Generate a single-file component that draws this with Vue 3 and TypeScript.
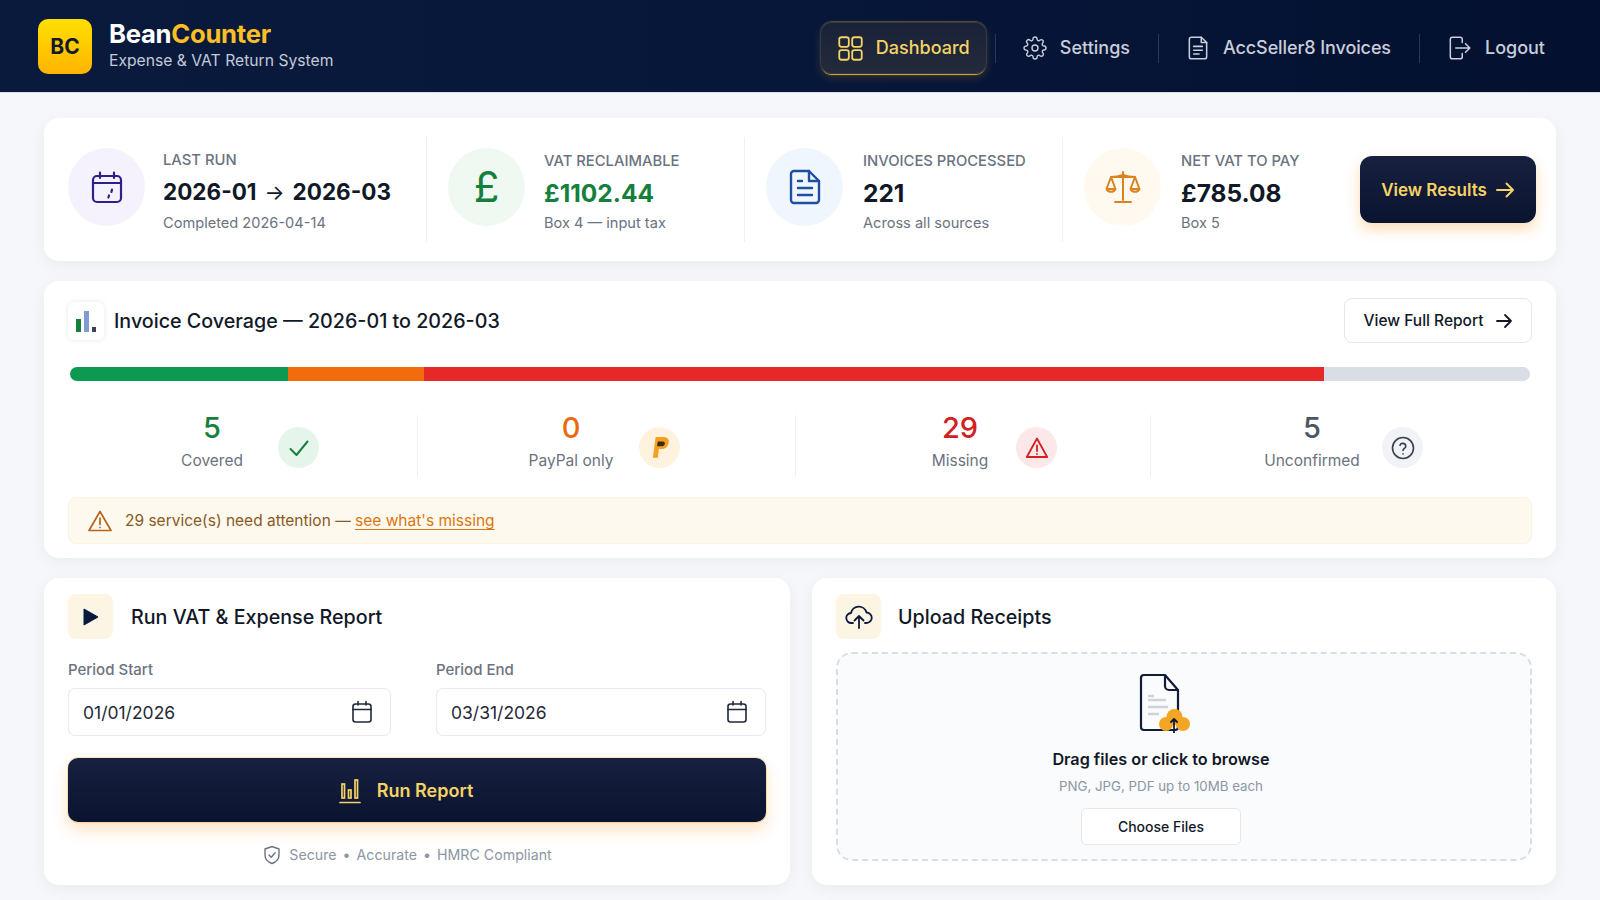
<template>
  <div class="page">
    <header class="topbar">
      <div class="brand">
        <div class="logo">BC</div>
        <div class="brand-text">
          <div class="brand-name">Bean<span>Counter</span></div>
          <div class="brand-sub">Expense &amp; VAT Return System</div>
        </div>
      </div>
      <nav class="nav">
        <a class="nav-item active">
          <svg width="27" height="27" viewBox="0 0 24 24" fill="none" stroke="currentColor" stroke-width="1.600">
            <rect x="2" y="2" width="8.500" height="8.500" rx="2" /><rect x="13.500" y="2" width="8.500" height="8.500" rx="2" />
            <rect x="2" y="13.500" width="8.500" height="8.500" rx="2" /><rect x="13.500" y="13.500" width="8.500" height="8.500" rx="2" />
          </svg>
          Dashboard
        </a>
        <span class="nav-sep first"></span>
        <a class="nav-item settings">
          <svg width="24" height="24" viewBox="0 0 24 24" fill="none" stroke="currentColor" stroke-width="1.400" stroke-linecap="round" stroke-linejoin="round">
            <circle cx="12" cy="12" r="3" />
            <path d="M19.4 15a1.65 1.65 0 0 0 .33 1.82l.06.06a2 2 0 1 1-2.83 2.83l-.06-.06a1.65 1.65 0 0 0-1.82-.33 1.65 1.65 0 0 0-1 1.51V21a2 2 0 0 1-4 0v-.09A1.65 1.65 0 0 0 9 19.4a1.65 1.65 0 0 0-1.82.33l-.06.06a2 2 0 1 1-2.83-2.83l.06-.06a1.65 1.65 0 0 0 .33-1.82 1.65 1.65 0 0 0-1.51-1H3a2 2 0 0 1 0-4h.09A1.65 1.65 0 0 0 4.6 9a1.65 1.65 0 0 0-.33-1.82l-.06-.06a2 2 0 1 1 2.83-2.83l.06.06a1.65 1.65 0 0 0 1.82.33H9a1.65 1.65 0 0 0 1-1.51V3a2 2 0 0 1 4 0v.09a1.65 1.65 0 0 0 1 1.51 1.65 1.65 0 0 0 1.82-.33l.06-.06a2 2 0 1 1 2.83 2.83l-.06.06a1.65 1.65 0 0 0-.33 1.82V9a1.65 1.65 0 0 0 1.51 1H21a2 2 0 0 1 0 4h-.09a1.65 1.65 0 0 0-1.51 1z" />
          </svg>
          Settings
        </a>
        <span class="nav-sep"></span>
        <a class="nav-item invoices">
          <svg width="26" height="26" viewBox="0 0 24 24" fill="none" stroke="currentColor" stroke-width="1.400" stroke-linecap="round" stroke-linejoin="round">
            <path d="M6 2h9l5 5v13a2 2 0 0 1-2 2H6a2 2 0 0 1-2-2V4a2 2 0 0 1 2-2z" /><path d="M15 2v5h5" />
            <path d="M8 10.500h8M8 14h8M8 17.500h5" />
          </svg>
          AccSeller8 Invoices
        </a>
        <span class="nav-sep"></span>
        <a class="nav-item logout">
          <svg width="26" height="26" viewBox="0 0 24 24" fill="none" stroke="currentColor" stroke-width="1.400" stroke-linecap="round" stroke-linejoin="round">
            <path d="M15 7V4a2 2 0 0 0-2-2H6a2 2 0 0 0-2 2v16a2 2 0 0 0 2 2h7a2 2 0 0 0 2-2v-3" /><path d="M9 12h13M18 8l4 4-4 4" />
          </svg>
          Logout
        </a>
      </nav>
    </header>

    <main class="content">
      <section class="card summary">
        <div v-for="stat in stats" :key="stat.label" class="stat">
          <div class="stat-icon" :class="stat.tone">
            <svg v-if="stat.tone === 'violet'" width="34" height="34" viewBox="0 0 34 34" fill="none" stroke="currentColor" stroke-width="2.200" stroke-linecap="round" stroke-linejoin="round">
              <rect x="3" y="6" width="28" height="26" rx="4" /><path d="M3 13h28M10 2.500V8M24 2.500V8M22 19.500l-.6 2.500M19 25.500l-.6 2" />
            </svg>
            <span v-else-if="stat.tone === 'green'" class="pound">£</span>
            <svg v-else-if="stat.tone === 'blue'" width="32" height="36" viewBox="0 0 32 36" fill="none" stroke="currentColor" stroke-width="2.400" stroke-linecap="round" stroke-linejoin="round">
              <path d="M6 2h14l10 10v19a3 3 0 0 1-3 3H5a3 3 0 0 1-3-3V5a3 3 0 0 1 3-3z" /><path d="M20 2v10h10" /><path d="M9 12h4M9 19h14M9 26h14" />
            </svg>
            <svg v-else width="36" height="34" viewBox="0 0 36 34" fill="none" stroke="currentColor" stroke-width="2" stroke-linecap="round" stroke-linejoin="round">
              <path d="M18 2v28M10 32h16M6 7h24M18 5c-3 1-8 2-12 2M18 5c3 1 8 2 12 2" />
              <path d="M6 7 1.500 19a5 5 0 0 0 9 0L6 7zM30 7l-4.500 12a5 5 0 0 0 9 0L30 7zM1.500 19h9M25.500 19h9" />
            </svg>
          </div>
          <div class="stat-body">
            <div class="stat-label">{{ stat.label }}</div>
            <div v-if="stat.range" class="stat-value range">{{ stat.range[0] }}<span>→</span>{{ stat.range[1] }}</div>
            <div v-else class="stat-value" :class="stat.tone">{{ stat.value }}</div>
            <div class="stat-note">{{ stat.note }}</div>
          </div>
        </div>
        <button class="btn-dark results">
          View Results
          <svg width="20" height="18" viewBox="0 0 20 18" fill="none" stroke="currentColor" stroke-width="2" stroke-linecap="round" stroke-linejoin="round"><path d="M2 9h16M11.500 2.500 18 9l-6.500 6.500" /></svg>
        </button>
      </section>

      <section class="card coverage">
        <div class="coverage-head">
          <div class="chart-chip">
            <svg width="22" height="24" viewBox="0 0 22 24">
              <rect x="1" y="10" width="5" height="13" fill="#15803d" /><rect x="9" y="2" width="5" height="21" fill="#7f9bd1" /><rect x="17" y="18" width="4" height="5" fill="#3f3f5a" />
            </svg>
          </div>
          <h2>Invoice Coverage — 2026-01 to 2026-03</h2>
          <button class="btn-light">
            View Full Report
            <svg width="18" height="16" viewBox="0 0 18 16" fill="none" stroke="currentColor" stroke-width="1.800" stroke-linecap="round" stroke-linejoin="round"><path d="M2 8h14M10 2l6 6-6 6" /></svg>
          </button>
        </div>

        <div class="bar">
          <div v-for="seg in segments" :key="seg.color" class="seg" :style="{ width: seg.share + '%', background: seg.color }"></div>
        </div>

        <div class="tallies">
          <div class="tally covered">
            <div class="tally-text"><b>5</b><span>Covered</span></div>
            <div class="tally-icon">
              <svg width="24" height="24" viewBox="0 0 24 24" fill="none" stroke="currentColor" stroke-width="2" stroke-linecap="round" stroke-linejoin="round"><path d="M3.500 13 9.500 19 20.500 5.500" /></svg>
            </div>
          </div>
          <div class="tally paypal">
            <div class="tally-text"><b>0</b><span>PayPal only</span></div>
            <div class="tally-icon">
              <svg width="20" height="24" viewBox="0 0 18 22">
                <path d="M5 1h7c3.500 0 5.500 2 5 5-.6 4-3.500 6-7 6H8l-1 8H2.500L5 1z" fill="#f5a020" />
                <path d="M7 5h4.500c1.500 0 2.200 1 1.900 2.300-.3 1.500-1.500 2.200-3 2.200H6.300L7 5z" fill="#3d2a10" />
              </svg>
            </div>
          </div>
          <div class="tally missing">
            <div class="tally-text"><b>29</b><span>Missing</span></div>
            <div class="tally-icon">
              <svg width="24" height="24" viewBox="0 0 24 24" fill="none" stroke="currentColor" stroke-width="1.800" stroke-linecap="round" stroke-linejoin="round"><path d="M12 2.500 1.800 21h20.400L12 2.500z" /><path d="M12 9.500v5.500M12 18v.1" /></svg>
            </div>
          </div>
          <div class="tally unconfirmed">
            <div class="tally-text"><b>5</b><span>Unconfirmed</span></div>
            <div class="tally-icon">
              <svg width="24" height="24" viewBox="0 0 24 24" fill="none" stroke="currentColor" stroke-width="1.600" stroke-linecap="round" stroke-linejoin="round"><circle cx="12" cy="12" r="10.500" /><path d="M9 9.300a3 3 0 0 1 5.800.9c0 2-2.800 2.400-2.800 4.300M12 17.800v.1" /></svg>
            </div>
          </div>
        </div>

        <div class="attention">
          <svg width="24" height="22" viewBox="0 0 24 22" fill="none" stroke="#b5651d" stroke-width="1.700" stroke-linecap="round" stroke-linejoin="round"><path d="M12 1.500 1 20.500h22L12 1.500z" /><path d="M12 8v6.500M12 17.300v.1" /></svg>
          <span>29 service(s) need attention — <a>see what's missing</a></span>
        </div>
      </section>

      <div class="lower">
        <section class="card run">
          <div class="panel-head">
            <div class="chip">
              <svg width="16" height="18" viewBox="0 0 16 18"><path d="M1 1v16l14-8z" fill="#0b1a3c" stroke="#0b1a3c" stroke-linejoin="round" /></svg>
            </div>
            <h2>Run VAT &amp; Expense Report</h2>
          </div>
          <div class="fields">
            <div v-for="field in fields" :key="field.label" class="field">
              <label>{{ field.label }}</label>
              <div class="date-input">
                {{ field.value }}
                <svg width="22" height="24" viewBox="0 0 22 24" fill="none" stroke="#1f2937" stroke-width="1.600" stroke-linecap="round"><rect x="2" y="4" width="18" height="18" rx="2.500" /><path d="M2 9.500h18M7 1.500V5M15 1.500V5" /></svg>
              </div>
            </div>
          </div>
          <button class="btn-dark run-btn">
            <svg width="22" height="28" viewBox="0 0 22 28" fill="none" stroke="currentColor" stroke-width="1.700" stroke-linecap="round"><path d="M1 26.500h20" /><rect x="3" y="8" width="2.500" height="14" /><rect x="9.500" y="14" width="2.500" height="8" /><rect x="16" y="4" width="2.500" height="18" /></svg>
            Run Report
          </button>
          <div class="assurance">
            <svg width="18" height="20" viewBox="0 0 18 20" fill="none" stroke="#6b7280" stroke-width="1.400" stroke-linecap="round" stroke-linejoin="round"><path d="M9 1.500 2 4v6c0 4 3 7 7 8.500 4-1.500 7-4.500 7-8.500V4L9 1.500z" /><path d="m6 10 2.200 2.200L12.200 7.800" /></svg>
            <span>Secure</span><i>•</i><span>Accurate</span><i>•</i><span>HMRC Compliant</span>
          </div>
        </section>

        <section class="card upload">
          <div class="panel-head">
            <div class="chip">
              <svg width="28" height="26" viewBox="0 0 28 26" fill="none" stroke="#0b1a3c" stroke-width="1.800" stroke-linecap="round" stroke-linejoin="round"><path d="M8 19H6.500A5 5 0 0 1 6 9a8 8 0 0 1 15.500-.5A5.200 5.200 0 0 1 21.500 19H20" /><path d="M14 24V12M9.500 16.500 14 12l4.500 4.500" /></svg>
            </div>
            <h2>Upload Receipts</h2>
          </div>
          <div class="dropzone">
            <svg class="drop-icon" width="52" height="60" viewBox="0 0 52 60" fill="none">
              <path d="M6 2h21l13 15v37a3 3 0 0 1-3 3H6a3 3 0 0 1-3-3V5a3 3 0 0 1 3-3z" stroke="#111c36" stroke-width="2.200" stroke-linejoin="round" />
              <path d="M27 2v11a4 4 0 0 0 4 4h9" stroke="#111c36" stroke-width="2.200" stroke-linejoin="round" />
              <path d="M10 23h6M10 27h18M10 34h20M10 41h11" stroke="#cdd2db" stroke-width="2.600" />
              <g fill="#f5a524">
                <circle cx="36.500" cy="44" r="8" /><circle cx="28" cy="51" r="7" /><circle cx="45" cy="51" r="7" />
              </g>
              <path d="M36 60V46M33 49l3-3 3 3" stroke="#111c36" stroke-width="1.800" stroke-linecap="round" stroke-linejoin="round" />
            </svg>
            <div class="drop-title">Drag files or click to browse</div>
            <div class="drop-note">PNG, JPG, PDF up to 10MB each</div>
            <button class="choose">Choose Files</button>
          </div>
        </section>
      </div>
    </main>
  </div>
</template>

<script setup lang="ts">
interface Stat {
  label: string
  value?: string
  range?: [string, string]
  note: string
  tone: 'violet' | 'green' | 'blue' | 'amber'
}

const stats: Stat[] = [
  { label: 'Last Run', range: ['2026-01', '2026-03'], note: 'Completed 2026-04-14', tone: 'violet' },
  { label: 'VAT Reclaimable', value: '£1102.44', note: 'Box 4 — input tax', tone: 'green' },
  { label: 'Invoices Processed', value: '221', note: 'Across all sources', tone: 'blue' },
  { label: 'Net VAT to Pay', value: '£785.08', note: 'Box 5', tone: 'amber' }
]

const segments = [
  { share: 14.93, color: '#0c9a50' },
  { share: 9.32, color: '#f26c0d' },
  { share: 61.64, color: '#e62828' },
  { share: 14.11, color: '#d8dde6' }
]

const fields = [
  { label: 'Period Start', value: '01/01/2026' },
  { label: 'Period End', value: '03/31/2026' }
]
</script>

<style>
html,
body {
  margin: 0;
  background: #f5f7fa;
}
</style>

<style scoped>
.page {
  min-height: 900px;
  background: #f5f7fa;
  font-family: Inter, 'Liberation Sans', sans-serif;
  color: #111827;
}

.topbar {
  height: 93px;
  box-sizing: border-box;
  padding: 0 38px;
  display: flex;
  align-items: center;
  justify-content: space-between;
  background: linear-gradient(90deg, #0a1a3c 0%, #07173a 50%, #03102f 100%);
  border-bottom: 1px solid #d9dde5;
}

.brand {
  display: flex;
  align-items: center;
  gap: 17px;
}

.logo {
  width: 54px;
  height: 55px;
  border-radius: 10px;
  background: linear-gradient(180deg, #ffe000 0%, #ffb400 100%);
  color: #14182c;
  font-weight: 700;
  font-size: 21px;
  display: flex;
  align-items: center;
  justify-content: center;
}

.brand-text {
  margin-bottom: 4px;
}

.brand-name {
  font-size: 25.700px;
  line-height: 32px;
  font-weight: 700;
  color: #fff;
  letter-spacing: -0.3px;
}

.brand-name span {
  color: #fbbf24;
}

.brand-sub {
  margin-top: 1px;
  font-size: 15.700px;
  line-height: 20px;
  color: #c4cad6;
}

.nav {
  display: flex;
  align-items: center;
  margin-right: 17px;
  padding-top: 4px;
}

.nav-item {
  display: flex;
  align-items: center;
  gap: 13px;
  font-size: 18px;
  line-height: 24px;
  font-weight: 500;
  color: #c9cedb;
}

.nav-item.invoices {
  gap: 12px;
  letter-spacing: -0.1px;
}

.nav-item.active {
  box-sizing: border-box;
  width: 167px;
  height: 52px;
  padding: 0 16px;
  gap: 12px;
  border: 1px solid #343b50;
  border-radius: 12px;
  color: #f6d365;
  background: linear-gradient(180deg, #1a2238 0%, #232a3b 100%);
  box-shadow: 0 2px 1px -1px #e8ab2a, 0 -1px 1px #5e4d2c, 0 4px 8px rgba(245, 184, 46, 0.16);
}

.nav-sep {
  width: 1px;
  height: 29px;
  margin: 0 26px 0 28px;
  background: #28375a;
}

.nav-sep.first {
  margin: 0 27px 0 8px;
}

.card {
  background: #fff;
  border-radius: 15px;
  box-shadow: 0 4px 16px rgba(20, 30, 60, 0.05);
}

.content {
  padding: 25px 44px 15px;
  display: flex;
  flex-direction: column;
  gap: 20px;
}

.summary {
  height: 143px;
  display: grid;
  grid-template-columns: 383px 318px 318px 297px 176px;
  align-items: center;
}

.stat {
  height: 105px;
  display: flex;
  align-items: center;
  gap: 19px;
  padding-left: 21px;
  border-right: 1px solid #eef0f4;
}

.stat:first-child {
  padding-left: 24px;
  gap: 18px;
}

.stat:nth-child(n + 3) {
  gap: 20px;
}

.stat:nth-child(4) {
  border-right: 0;
}

.stat-icon {
  width: 77px;
  height: 78px;
  flex: none;
  margin-bottom: 5px;
  border-radius: 50%;
  display: flex;
  align-items: center;
  justify-content: center;
}

.stat-icon.violet {
  background: #f5f2fd;
  color: #2e1f8a;
}

.stat-icon.green {
  background: #eff9f2;
  color: #15803d;
}

.stat-icon.blue {
  background: #f0f6fd;
  color: #1e4fa3;
}

.stat-icon.amber {
  background: #fff9ef;
  color: #d9831f;
}

.pound {
  font-size: 42px;
  line-height: 1;
}

.stat-body {
  padding-top: 4px;
}

.stat-label {
  font-size: 14.800px;
  line-height: 20px;
  font-weight: 500;
  color: #6b7280;
  text-transform: uppercase;
}

.stat-value {
  font-size: 24.500px;
  line-height: 32px;
  font-weight: 700;
  margin-top: 6px;
  color: #111827;
}

.stat-value.range {
  font-size: 22.500px;
}

.stat-value.range span {
  font-size: 21px;
  font-weight: 400;
  margin: 0 8px;
}

.stat-value.green {
  color: #15803d;
}

.stat-note {
  margin-top: 4px;
  font-size: 14.600px;
  line-height: 20px;
  color: #6b7280;
}

.btn-dark {
  border: 0;
  font-family: inherit;
  color: #f6d365;
  background: linear-gradient(180deg, #17213f 0%, #0a1330 100%);
  box-shadow: 0 6px 14px rgba(245, 140, 11, 0.3);
  display: flex;
  align-items: center;
  justify-content: center;
}

.results {
  height: 67px;
  border-radius: 12px;
  font-size: 17px;
  font-weight: 600;
  gap: 8px;
}

.coverage {
  height: 277px;
  box-sizing: border-box;
  padding: 17px 24px 14px;
}

.coverage-head {
  display: flex;
  align-items: center;
  height: 45px;
}

.chart-chip {
  width: 36px;
  height: 38px;
  margin-right: 10px;
  border-radius: 6px;
  display: flex;
  align-items: center;
  justify-content: center;
  box-shadow: 0 0 5px rgba(20, 30, 60, 0.1);
}

.coverage-head h2,
.panel-head h2 {
  margin: 0;
  font-size: 19.700px;
  font-weight: 500;
  color: #111827;
}

.btn-light {
  margin-left: auto;
  width: 188px;
  height: 45px;
  box-sizing: border-box;
  border: 1.500px solid #e5e7eb;
  border-radius: 8px;
  background: #fff;
  font-family: inherit;
  font-size: 15.500px;
  font-weight: 500;
  color: #111827;
  display: flex;
  align-items: center;
  justify-content: center;
  gap: 11px;
}

.bar {
  margin: 24px 2px 0;
  height: 14px;
  border-radius: 7px;
  overflow: hidden;
  display: flex;
}

.seg {
  height: 100%;
}

.tallies {
  margin: 34px 0 0 2px;
  display: grid;
  grid-template-columns: 348px 378px 355px 1fr;
  height: 62px;
}

.tally {
  display: flex;
  align-items: flex-start;
  border-right: 1px solid #eef0f4;
}

.tally:last-child {
  border-right: 0;
}

.tally-text {
  display: flex;
  flex-direction: column;
  align-items: center;
  margin-top: -5px;
}

.tally-text b {
  font-size: 29px;
  line-height: 36px;
  font-weight: 500;
}

.tally-text span {
  margin-top: 4px;
  font-size: 15.500px;
  line-height: 22px;
  color: #6b7280;
}

.tally-icon {
  width: 41px;
  height: 41px;
  margin-top: 12px;
  border-radius: 50%;
  display: flex;
  align-items: center;
  justify-content: center;
}

.covered { padding-left: 76px; }
.covered .tally-text { width: 132px; }
.covered b { color: #15803d; }
.covered .tally-icon { background: #e6f5eb; color: #15803d; }

.paypal { padding-left: 85px; }
.paypal .tally-text { width: 136px; }
.paypal b { color: #ea6a10; }
.paypal .tally-icon { background: #fff3e0; }

.missing { padding-left: 108px; }
.missing .tally-text { width: 112px; }
.missing b { color: #d32020; }
.missing .tally-icon { background: #fce8e8; color: #d32020; }

.unconfirmed { padding-left: 91px; }
.unconfirmed .tally-text { width: 140px; }
.unconfirmed b { color: #4b5563; }
.unconfirmed .tally-icon { background: #f1f3f7; color: #374151; }

.attention {
  margin-top: 20px;
  height: 47px;
  box-sizing: border-box;
  padding: 0 19px;
  display: flex;
  align-items: center;
  gap: 13px;
  background: #fef9ee;
  border: 1px solid #fbf3e0;
  border-radius: 8px;
  font-size: 15.500px;
  color: #8a5a24;
}

.attention a {
  color: #d9760f;
  text-decoration: underline;
  text-underline-offset: 3px;
}

.lower {
  display: grid;
  grid-template-columns: 746px 1fr;
  gap: 22px;
}

.run,
.upload {
  height: 307px;
  box-sizing: border-box;
  padding: 16px 24px 0;
}

.panel-head {
  display: flex;
  align-items: center;
  gap: 18px;
  height: 45px;
}

.chip {
  width: 45px;
  height: 45px;
  border-radius: 8px;
  background: #fdf5e4;
  display: flex;
  align-items: center;
  justify-content: center;
}

.upload .panel-head {
  gap: 17px;
}

.fields {
  margin-top: 21px;
  display: grid;
  grid-template-columns: 323px 330px;
  gap: 45px;
}

.field label {
  display: block;
  font-size: 15px;
  line-height: 20px;
  color: #6b7280;
  font-weight: 500;
}

.date-input {
  margin-top: 8px;
  height: 48px;
  box-sizing: border-box;
  padding: 0 17px 0 14px;
  border: 1.500px solid #e8eaef;
  border-radius: 7px;
  display: flex;
  align-items: center;
  justify-content: space-between;
  font-size: 17.500px;
  color: #1f2937;
}

.run-btn {
  margin-top: 22px;
  width: 100%;
  height: 64px;
  padding-right: 28px;
  border-radius: 10px;
  gap: 16px;
  font-size: 18px;
  font-weight: 600;
  box-shadow: 0 0 0 1px rgba(245, 180, 60, 0.35), 0 8px 16px rgba(245, 140, 11, 0.24);
}

.assurance {
  margin-top: 23px;
  padding-right: 19px;
  display: flex;
  align-items: center;
  justify-content: center;
  gap: 6px;
  font-size: 14.200px;
  line-height: 20px;
  color: #8d95a3;
}

.assurance svg {
  margin-right: 2px;
}

.assurance i {
  font-style: normal;
}

.dropzone {
  margin-top: 13px;
  height: 209px;
  box-sizing: border-box;
  border: 2px dashed #d9dde5;
  border-radius: 16px;
  background: #fafbfd;
  display: flex;
  flex-direction: column;
  align-items: center;
  padding: 19px 46px 0 0;
}

.drop-icon {
  display: block;
  margin-left: 6px;
}

.drop-title {
  margin-top: 15px;
  font-size: 16.200px;
  line-height: 22px;
  font-weight: 600;
  color: #111827;
}

.drop-note {
  margin-top: 7px;
  font-size: 13.300px;
  line-height: 18px;
  color: #8d95a3;
}

.choose {
  margin-top: 13px;
  width: 160px;
  height: 37px;
  border: 1.500px solid #e5e7eb;
  border-radius: 5px;
  background: #fff;
  font-family: inherit;
  font-size: 14px;
  font-weight: 500;
  color: #111827;
}
</style>
